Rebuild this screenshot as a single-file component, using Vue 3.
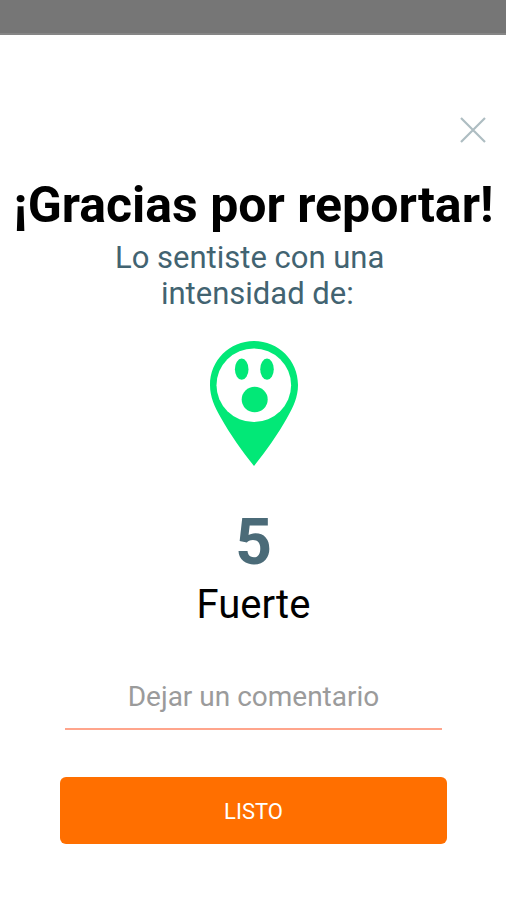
<script setup>
import { ref } from 'vue'

const open = ref(true)
const comment = ref('')
const report = { level: 5, label: 'Fuerte' }

function close() {
  open.value = false
}
</script>

<template>
  <div class="screen">
    <div class="status-bar"></div>
    <main v-if="open" class="panel">
      <div class="toolbar">
        <button class="close" type="button" aria-label="Cerrar" @click="close">
          <svg viewBox="0 0 26 26" width="26" height="26" aria-hidden="true">
            <path d="M1 1L25 25M25 1L1 25" fill="none" stroke="#aebdc2" stroke-width="2.2" />
          </svg>
        </button>
      </div>

      <h1 class="title">¡Gracias por reportar!</h1>
      <p class="subtitle">Lo sentiste con una&nbsp;<br />&nbsp;intensidad de:</p>

      <svg class="pin" viewBox="-1 0 89 125" width="89" height="125" aria-hidden="true">
        <path
          d="M44 0C19.500 0 0 19.500 0 44C0 56 4.500 65.500 11 77C20 93 32 110 44 125C56 110 68 93 77 77C83.500 65.500 88 56 88 44C88 19.500 68.500 0 44 0Z"
          fill="#02e877"
        />
        <ellipse cx="43.800" cy="44.200" rx="37.300" ry="36.800" fill="#fff" />
        <ellipse cx="31.700" cy="28.200" rx="6.800" ry="10.600" fill="#02e877" />
        <ellipse cx="57" cy="28.200" rx="6.800" ry="10.600" fill="#02e877" />
        <ellipse cx="44.700" cy="58.500" rx="13" ry="12.700" fill="#02e877" />
      </svg>

      <p class="level">{{ report.level }}</p>
      <p class="label">{{ report.label }}</p>

      <form class="form" @submit.prevent="close">
        <input
          v-model="comment"
          class="comment"
          type="text"
          placeholder="Dejar un comentario"
          aria-label="Dejar un comentario"
        />
        <button class="submit" type="submit">LISTO</button>
      </form>
    </main>
  </div>
</template>

<style>
body {
  margin: 0;
  background: #fff;
}
</style>

<style scoped>
.screen {
  min-height: 100vh;
  background: #fff;
  font-family: Roboto, "Liberation Sans", sans-serif;
}

.status-bar {
  box-sizing: border-box;
  height: 35px;
  background: #767676;
  border-bottom: 2px solid #858585;
}

.panel {
  display: flex;
  flex-direction: column;
  align-items: center;
  padding: 76px 0 0 1px;
  text-align: center;
}

.toolbar {
  display: flex;
  align-self: stretch;
  justify-content: flex-end;
  padding: 0 14px;
}

.close {
  display: flex;
  padding: 6px;
  border: 0;
  background: none;
  cursor: pointer;
}

.title {
  margin: 28px 0 0;
  color: #000;
  font-size: 50px;
  font-weight: 700;
  line-height: 56px;
}

.subtitle {
  margin: 7px 0 0;
  color: #426371;
  font-size: 31px;
  line-height: 36px;
}

.pin {
  display: block;
  margin-top: 29px;
}

.level {
  margin: 39px 0 0;
  color: #4b6b78;
  font-size: 64px;
  font-weight: 700;
  line-height: 76px;
}

.label {
  margin: 0;
  color: #000;
  font-size: 40px;
  line-height: 48px;
}

.form {
  display: flex;
  flex-direction: column;
  align-self: stretch;
  margin: 35px 59px 0;
}

.comment {
  box-sizing: border-box;
  height: 66px;
  min-width: 0;
  margin: 0 5px;
  padding: 0;
  border: 0;
  border-bottom: 2px solid #ffa58c;
  border-radius: 0;
  outline: 0;
  background: none;
  color: #000;
  font-family: inherit;
  font-size: 28px;
  text-align: center;
}

.comment::placeholder {
  color: #9b9b9b;
  opacity: 1;
}

.submit {
  height: 67px;
  margin-top: 47px;
  padding: 2px 0 0;
  border: 0;
  border-radius: 6px;
  background: #ff6f00;
  color: #fff;
  font-family: inherit;
  font-size: 22px;
  cursor: pointer;
}
</style>
